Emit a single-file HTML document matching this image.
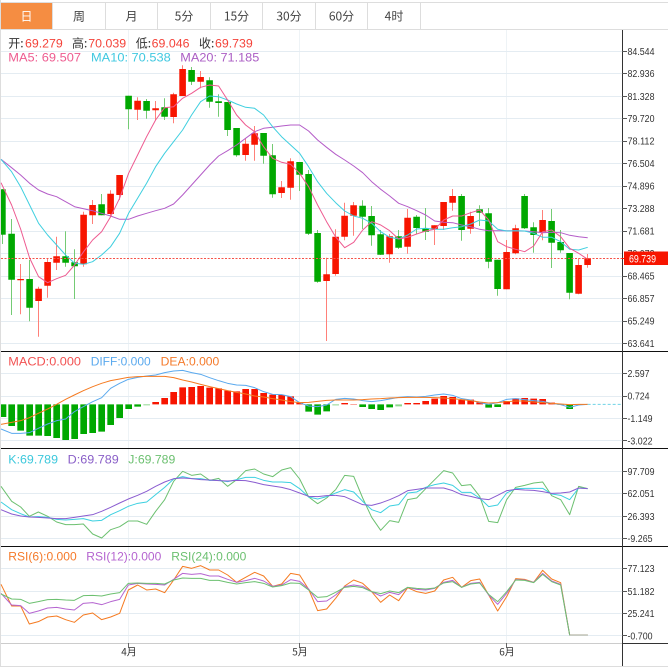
<!DOCTYPE html>
<html>
<head>
<meta charset="utf-8">
<style>
html,body{margin:0;padding:0;background:#fff;}
body{width:668px;height:672px;overflow:hidden;}
svg{display:block;}
text{font-family:"Liberation Sans","Noto Sans CJK SC",sans-serif;}
.cjk{font-family:"Noto Sans CJK SC","Liberation Sans",sans-serif;}
.l{font-size:12px;}
.a{font-size:10px;fill:#333;}
.gm{stroke:#e4ecf2;stroke-width:1;fill:none;}
.ln{fill:none;stroke-width:3;stroke-linejoin:round;}
.ln1{fill:none;stroke-width:1;stroke-linejoin:round;}
</style>
</head>
<body>
<svg width="668" height="672" viewBox="0 0 668 672" xmlns="http://www.w3.org/2000/svg">
<rect width="668" height="672" fill="#fff"/>

<!-- tabs -->
<rect x="1" y="3" width="51" height="26" fill="#f58d42"/>
<path d="M0 2.5H668M0 29.5H668" stroke="#dddddd" fill="none"/>
<path d="M52.5 3V29M105.5 3V29M157.5 3V29M210.5 3V29M262.5 3V29M315.5 3V29M367.5 3V29M420.5 3V29" stroke="#dddddd" fill="none"/>
<g class="cjk" font-size="12" text-anchor="middle" fill="#444">
<text class="cjk" x="26.5" y="20.5" fill="#fff">日</text>
<text class="cjk" x="79" y="20.5">周</text>
<text class="cjk" x="131.5" y="20.5">月</text>
<text class="cjk" x="184" y="20.5">5分</text>
<text class="cjk" x="236.5" y="20.5">15分</text>
<text class="cjk" x="289" y="20.5">30分</text>
<text class="cjk" x="341.5" y="20.5">60分</text>
<text class="cjk" x="394" y="20.5">4时</text>
</g>

<!-- left border -->
<rect x="0" y="0" width="1" height="666" fill="#dddddd"/>

<!-- vertical grid -->
<path d="M128.5 30V643M299.5 30V643M506.5 30V643" stroke="#eef3f6" fill="none"/>

<!-- horizontal grid -->
<path class="gm" d="M1 51.5H622M1 73.5H622M1 96.5H622M1 118.5H622M1 141.5H622M1 163.5H622M1 186.5H622M1 208.5H622M1 231.5H622M1 253.5H622M1 276.5H622M1 298.5H622M1 321.5H622M1 343.5H622"/>
<path class="gm" d="M1 373.5H622M1 396.5H622M1 418.5H622M1 440.5H622"/>
<path class="gm" d="M1 471.5H622M1 493.5H622M1 516.5H622M1 538.5H622"/>
<path class="gm" d="M1 568.5H622M1 591.5H622M1 613.5H622M1 635.5H622"/>

<!-- wicks -->
<path fill="none" stroke="#ff8079" stroke-width="1" d="M20.5 264V314.3M38.5 286.7V336.7M47.5 258.3V297.7M56.5 236.7V270M83.5 211.7V266.7M92.5 200V224M110.5 190.3V217.3M119.5 175V200M137.5 97.3V120M155.5 101V120M173.5 92.7V123.3M182.5 65.3V96M200.5 71V88.3M245.5 138.3V160.7M254.5 126V160.7M281.5 181V198M290.5 158.3V199.7M326.5 257.7V341M335.5 229.3V275.7M344.5 202.7V240.3M353.5 202V235.7M389.5 234V262.7M407.5 209V253.7M434.5 225.3V245M443.5 202V230M452.5 189V210.7M470.5 211.7V233.7M506.5 240V289.3M515.5 224.7V254.3M542.5 210V240.3M578.5 258.3V294.3M587.5 254V267.7"/>
<path fill="none" stroke="#74cb74" stroke-width="1" d="M2.5 189V244M11.5 219V315M29.5 260V321.3M65.5 231.3V266.7M74.5 249.3V299M101.5 194V215.3M128.5 95.7V129.3M146.5 99V118.7M164.5 98.3V120M191.5 67V85M209.5 77.3V107.7M218.5 94.3V116.7M227.5 102V136M236.5 128V156.7M263.5 133V163.7M272.5 144V197.7M299.5 162V191M308.5 170V235M317.5 230V282.7M362.5 200.3V229M371.5 206V245.7M380.5 230V255M398.5 230V249M416.5 215V234M425.5 208V240M461.5 194V240.7M479.5 205.3V226M488.5 208V268.3M497.5 259.7V295.7M524.5 194V229M533.5 222.3V252.7M551.5 209V268M560.5 230V252.7M569.5 253V299.3"/>

<!-- bodies -->
<path fill="none" stroke="#f71500" stroke-width="6.6" d="M20.6 279V280.3M38.6 288.7V301M47.6 262V285.7M56.6 256.3V262.7M83.6 214.7V264.3M92.6 205V215.3M110.6 193.7V214M119.6 175V195M137.6 100.7V109.7M155.6 108.3V110.3M173.6 94.3V117M182.6 69V96M200.6 77V81.7M245.6 143.7V155M254.6 133.3V144.7M281.6 187.3V193M290.6 161.3V187.7M326.6 274.3V281M335.6 236.7V274M344.6 215.7V236.7M353.6 205.3V215.7M389.6 236.3V254.3M407.6 217.7V246.7M434.6 225.3V229M443.6 202V226M452.6 196V202.7M470.6 216V228.7M506.6 252V289.3M515.6 228.3V253.3M542.6 220V232.3M578.6 265V293.7M587.6 258.3V265"/>
<rect x="1" y="189.3" width="4.7" height="45.4" fill="#00a800"/>
<path fill="none" stroke="#00a800" stroke-width="6.6" d="M11.6 233.7V279.7M29.6 279V307.7M65.6 256.3V262.7M74.6 262.3V266.3M101.6 204.3V215.3M128.6 95.7V109.3M146.6 101V110.7M164.6 107.3V116.7M191.6 70V81.7M209.6 80.3V101.7M218.6 101.3V103M227.6 102V130M236.6 128V155.3M263.6 133V155.7M272.6 155.3V194.3M299.6 162V174.7M308.6 174V233.7M317.6 233V281.7M362.6 205.7V216.7M371.6 216V235.3M380.6 234.3V254.7M398.6 236.3V247.7M416.6 216.7V228M425.6 228.3V231.7M461.6 196V230M479.6 209.3V212.7M488.6 213.3V261.7M497.6 259.7V289M524.6 196V228.3M533.6 227.3V235M551.6 221V242.7M560.6 242V250.3M569.6 253V292.7"/>

<!-- MA lines -->
<polyline class="ln1" stroke="#b45cc8" points="1,159.3 11.6,167.7 20.6,175 29.6,183.3 38.6,190 47.6,194 56.6,196.7 65.6,201.7 74.6,206.7 83.6,208.7 92.6,210.7 101.6,213.3 110.6,216 119.6,219.3 128.6,219.3 137.6,216 146.6,213.3 155.6,210.7 164.6,208.3 173.6,204 182.6,195 191.6,185 200.6,175 209.6,165 218.6,156 227.6,150.7 236.6,145 245.6,138.3 254.6,131.7 263.6,128.3 272.6,127.3 281.6,126 290.6,125 299.6,125 308.6,131 317.6,140 326.6,147.3 335.7,154.3 344.7,160 353.7,166 362.7,172.7 371.7,181.7 380.7,189.3 389.7,196 398.7,203.3 407.7,206.7 416.7,210.7 425.7,215 434.7,221 443.7,222.3 452.7,222.7 461.7,225 470.7,226.7 479.7,229.3 488.7,230.7 497.7,230.7 506.7,230.7 515.7,230.7 524.7,231 533.7,231.7 542.7,232.7 551.7,232.3 560.7,232.7 569.7,235.3 578.7,236.7 587.7,237.7"/>
<polyline class="ln1" stroke="#3fcfdf" points="1,159.3 11.6,171.7 20.6,186.7 29.6,205 38.6,223.3 47.6,235 56.6,245 65.6,255 74.6,263.3 83.6,264.3 92.6,261.7 101.6,255 110.6,246.7 119.6,233.3 128.6,213.3 137.6,198.3 146.6,183.3 155.6,166.7 164.6,153.3 173.6,141.7 182.6,130 191.6,115 200.6,101.7 209.6,96 218.6,96.7 227.6,100 236.6,104 245.6,107.3 254.6,108.3 263.6,115 272.6,126.7 281.6,136.7 290.6,145 299.6,153.3 308.6,166.7 317.6,181.7 326.6,193.3 335.7,202.7 344.7,211 353.7,216 362.7,218.3 371.7,223.3 380.7,231.7 389.7,237.3 398.7,239 407.7,235 416.7,229 425.7,228.3 434.7,229.3 443.7,229.3 452.7,227.7 461.7,226.7 470.7,224 479.7,220 488.7,221 497.7,229.3 506.7,231 515.7,230.7 524.7,231 533.7,233.3 542.7,237.3 551.7,237.3 560.7,241.7 569.7,249.3 578.7,250 587.7,247.3"/>
<polyline class="ln1" stroke="#ee5a90" points="1,182.7 11.6,205 20.6,229 29.6,258 38.6,276.7 47.6,282.7 56.6,278.7 65.6,275.3 74.6,265 83.6,251.7 92.6,240 101.6,231.7 110.6,216.7 119.6,198.3 128.6,173.3 137.6,155 146.6,136.7 155.6,120 164.6,107.7 173.6,106.7 182.6,98.3 191.6,93.3 200.6,87.3 209.6,85 218.6,86 227.6,100 236.6,115 245.6,125 254.6,131.7 263.6,146.7 272.6,158.3 281.6,162.3 290.6,164.3 299.6,173.3 308.6,186.7 317.6,205 326.6,221.7 335.7,237 344.7,247.7 353.7,242.3 362.7,230 371.7,221.7 380.7,225 389.7,230.7 398.7,239 407.7,237.3 416.7,234 425.7,231 434.7,229.3 443.7,220 452.7,216 461.7,216 470.7,212.7 479.7,210 488.7,220 497.7,241.7 506.7,246.7 515.7,249.3 524.7,251.7 533.7,246 542.7,231.7 551.7,230 560.7,236.7 569.7,248.3 578.7,253.3 587.7,259.3"/>

<!-- current price line -->
<path d="M1 258.5H622" stroke="#f5534a" stroke-width="1" stroke-dasharray="2 1.5" fill="none"/>

<!-- MACD bars -->
<g transform="translate(0,350) scale(0.33333)">
<rect x="3" y="163" width="16" height="38" fill="#00a800"/>
<path fill="none" stroke="#00a800" stroke-width="20" d="M35 163V228M62 163V242M89 163V257M116 163V257M143 163V258M170 163V264M197 163V270M224 163V267M251 163V252M278 163V249M305 163V245M332 163V225M359 163V204M386 163V177M413 163V170M926 163V185M953 163V194M980 163V184"/>
<path fill="none" stroke="#8fd68f" stroke-width="20" d="M440 163V166"/>
<path fill="none" stroke="#f71500" stroke-width="20" d="M467 163V156M494 163V144M521 163V126M548 163V112M575 163V111M602 163V108M629 163V113M656 163V115M683 163V122M710 163V124M737 163V117M764 163V117M791 163V129M818 163V134M845 163V135M872 163V139M899 163V158"/>
<polyline class="ln" stroke="#5aa9ee" points="3,237 35,250 62,250 88,248 115,235 143,222 170,212 197,207 223,185 250,170 278,155 305,143 332,115 359,100 385,88 413,82 440,78 467,75 494,68 521,63 548,61 575,68 602,73 629,83 656,92 683,100 710,105 737,106 764,113 791,125 818,133 845,134 872,140 899,158 926,168 953,170 980,165 1007,148"/>
<polyline class="ln" stroke="#f57a20" points="3,223 35,217 62,212 88,203 115,190 143,177 170,163 197,148 223,135 250,122 278,110 305,100 332,92 359,87 385,82 413,80 440,79 467,79 494,79 521,83 548,90 575,96 602,103 629,110 656,116 683,122 710,127 737,132 764,138 791,141 818,146 845,150 872,155 899,158 926,157 953,154 980,151 1007,150"/>
</g>
<g transform="translate(334,350) scale(0.33333)">
<path fill="none" stroke="#8fd68f" stroke-width="20" d="M5 163V166M194 163V169"/>
<path fill="none" stroke="#00a800" stroke-width="20" d="M86 163V171M113 163V177M140 163V180M167 163V172M464 163V173M491 163V171M707 163V177"/>
<path fill="none" stroke="#8fd68f" stroke-width="20" d="M680 163V165"/>
<path fill="none" stroke="#f71500" stroke-width="20" d="M32 163V159M59 163V162M221 163V159M248 163V159M275 163V153M302 163V146M329 163V138M356 163V141M383 163V150M410 163V149M437 163V157M518 163V153M545 163V145M572 163V144M599 163V146M626 163V147M653 163V158"/>
<polyline class="ln" stroke="#5aa9ee" points="5,148 32,145 59,147 86,152 113,155 140,152 167,147 194,142 221,140 248,141 275,139 302,135 329,132 356,136 383,146 410,150 437,158 464,163 491,158 518,148 545,146 572,149 599,152 626,154 653,160 680,164 707,172 734,165 761,163"/>
<polyline class="ln" stroke="#f57a20" points="5,150 32,150 59,150 86,149 113,147 140,146 167,144 194,143 221,142 248,142 275,142 302,143 329,144 356,146 383,149 410,152 437,156 464,159 491,158 518,155 545,153 572,153 599,156 626,158 653,160 680,162 707,164 734,163 761,163"/>
<path d="M761 163H860" stroke="#6fd3e6" stroke-width="3" stroke-dasharray="9 6" fill="none"/>
</g>

<!-- KDJ -->
<g transform="translate(0,448) scale(0.33333)">
<polyline class="ln" stroke="#6cc070" points="3,115 35,160 62,177 88,205 115,192 143,205 170,222 197,230 223,230 250,228 278,258 305,270 332,245 359,236 385,219 413,219 440,229 467,190 494,155 521,100 548,70 575,82 602,78 629,97 656,91 683,115 710,95 737,68 764,63 791,78 818,86 845,66 872,59 899,93 926,147 953,167 980,150 1007,125"/>
<polyline class="ln" stroke="#3cd0e0" points="3,162 35,185 62,197 88,207 115,206 143,208 170,214 197,216 223,214 250,212 278,219 305,217 332,200 359,188 385,175 413,166 440,162 467,140 494,118 521,93 548,86 575,92 602,92 629,97 656,97 683,101 710,95 737,88 764,88 791,97 818,102 845,102 872,104 899,122 926,147 953,153 980,146 1007,135"/>
<polyline class="ln" stroke="#8a5cd0" points="3,185 35,198 62,204 88,207 115,208 143,210 170,212 197,212 223,208 250,204 278,200 305,190 332,178 359,165 385,153 413,142 440,130 467,115 494,102 521,92 548,90 575,92 602,95 629,96 656,98 683,99 710,97 737,98 764,103 791,110 818,114 845,118 872,125 899,135 926,145 953,146 980,143 1007,142"/>
</g>
<g transform="translate(334,448) scale(0.33333)">
<polyline class="ln" stroke="#6cc070" points="5,125 32,82 59,85 86,150 113,208 140,247 167,218 194,223 221,155 248,150 275,122 302,95 329,68 356,75 383,113 410,110 437,145 464,220 491,224 518,155 545,118 572,112 599,105 626,102 653,143 680,155 707,200 734,115 761,122"/>
<polyline class="ln" stroke="#3cd0e0" points="5,135 32,125 59,132 86,160 113,185 140,194 167,174 194,170 221,135 248,132 275,118 302,110 329,105 356,112 383,133 410,133 437,150 464,176 491,171 518,135 545,122 572,121 599,121 626,121 653,138 680,142 707,155 734,120 761,122"/>
<polyline class="ln" stroke="#8a5cd0" points="5,142 32,146 59,158 86,170 113,172 140,165 167,155 194,143 221,128 248,124 275,120 302,120 329,120 356,128 383,140 410,145 437,152 464,155 491,142 518,128 545,124 572,126 599,127 626,131 653,136 680,135 707,132 734,120 761,122"/>
</g>

<!-- RSI -->
<g transform="translate(0,545) scale(0.33333)">
<polyline class="ln" stroke="#f57a20" points="3,118 35,183 62,183 88,237 115,230 143,216 170,213 197,224 223,232 250,210 278,204 305,224 332,216 359,205 385,135 413,120 440,135 467,132 494,143 521,105 548,64 575,70 602,62 629,75 656,75 683,90 710,112 737,97 764,82 791,93 818,124 845,117 872,85 899,90 926,133 953,197 980,192 1007,160"/>
<polyline class="ln" stroke="#b565d0" points="3,145 35,180 62,182 88,205 115,198 143,189 170,187 197,192 223,195 250,175 278,173 305,179 332,170 359,163 385,120 413,115 440,117 467,118 494,120 521,103 548,85 575,88 602,86 629,93 656,93 683,103 710,112 737,107 764,100 791,108 818,124 845,120 872,104 899,109 926,132 953,170 980,168 1007,150"/>
<polyline class="ln" stroke="#6cc070" points="3,147 35,162 62,163 88,175 115,170 143,164 170,163 197,165 223,166 250,152 278,151 305,153 332,147 359,143 385,115 413,114 440,115 467,115 494,117 521,105 548,99 575,100 602,100 629,106 656,106 683,112 710,117 737,113 764,110 791,115 818,126 845,122 872,114 899,115 926,135 953,157 980,155 1007,142"/>
</g>
<g transform="translate(334,545) scale(0.33333)">
<polyline class="ln" stroke="#f57a20" points="5,160 32,123 59,105 86,115 113,140 140,172 167,150 194,167 221,128 248,140 275,145 302,138 329,105 356,97 383,127 410,107 437,102 464,150 491,198 518,155 545,101 572,103 599,112 626,76 653,102 680,113 707,270 761,270"/>
<polyline class="ln" stroke="#b565d0" points="5,150 32,125 59,120 86,124 113,140 140,153 167,142 194,149 221,127 248,133 275,135 302,130 329,112 356,106 383,127 410,115 437,112 464,150 491,178 518,145 545,104 572,105 599,112 626,85 653,108 680,118 707,270 761,270"/>
<polyline class="ln" stroke="#6cc070" points="5,142 32,127 59,124 86,128 113,140 140,146 167,138 194,143 221,127 248,130 275,132 302,129 329,114 356,110 383,127 410,117 437,114 464,148 491,170 518,140 545,105 572,106 599,113 626,88 653,110 680,120 707,270 761,270"/>
<path d="M707 270H761" stroke="#b8b8a8" stroke-width="4" fill="none"/>
</g>

<!-- dividers and axis -->
<path d="M1 351.5H668M1 448.5H668M1 546.5H668" stroke="#111" stroke-width="1" fill="none"/>
<path d="M1 643.5H622" stroke="#cccccc" stroke-width="1" fill="none"/>
<path d="M622 643.5H668" stroke="#333" stroke-width="1" fill="none"/>
<path d="M622.5 30V666" stroke="#333" stroke-width="1" fill="none"/>
<path d="M0 666.5H668" stroke="#dddddd" stroke-width="1" fill="none"/>

<!-- ticks -->
<path d="M622 51.5H627M622 73.5H627M622 96.5H627M622 118.5H627M622 141.5H627M622 163.5H627M622 186.5H627M622 208.5H627M622 231.5H627M622 276.5H627M622 298.5H627M622 321.5H627M622 343.5H627M622 373.5H627M622 396.5H627M622 418.5H627M622 440.5H627M622 471.5H627M622 493.5H627M622 516.5H627M622 538.5H627M622 568.5H627M622 591.5H627M622 613.5H627M622 635.5H627" stroke="#555" stroke-width="1" fill="none"/>
<path d="M128.5 643V648M299.5 643V648M506.5 643V648" stroke="#666" fill="none"/>

<!-- axis labels -->
<text class="a" x="627.5" y="54.8" textLength="27" lengthAdjust="spacingAndGlyphs">84.544</text>
<text class="a" x="627.5" y="77" textLength="27" lengthAdjust="spacingAndGlyphs">82.936</text>
<text class="a" x="627.5" y="99.8" textLength="27" lengthAdjust="spacingAndGlyphs">81.328</text>
<text class="a" x="627.5" y="122" textLength="27" lengthAdjust="spacingAndGlyphs">79.720</text>
<text class="a" x="627.5" y="144.5" textLength="27" lengthAdjust="spacingAndGlyphs">78.112</text>
<text class="a" x="627.5" y="167" textLength="27" lengthAdjust="spacingAndGlyphs">76.504</text>
<text class="a" x="627.5" y="189.5" textLength="27" lengthAdjust="spacingAndGlyphs">74.896</text>
<text class="a" x="627.5" y="212" textLength="27" lengthAdjust="spacingAndGlyphs">73.288</text>
<text class="a" x="627.5" y="234.5" textLength="27" lengthAdjust="spacingAndGlyphs">71.681</text>
<text class="a" x="627.5" y="257" textLength="27" lengthAdjust="spacingAndGlyphs">70.073</text>
<rect x="624" y="251.5" width="44" height="13.5" fill="#f71500"/>
<path d="M622 258.5H624" stroke="#f71500" fill="none"/>
<text x="629" y="262.3" font-size="11" fill="#fff" textLength="27" lengthAdjust="spacingAndGlyphs">69.739</text>
<text class="a" x="627.5" y="279.5" textLength="27" lengthAdjust="spacingAndGlyphs">68.465</text>
<text class="a" x="627.5" y="302" textLength="27" lengthAdjust="spacingAndGlyphs">66.857</text>
<text class="a" x="627.5" y="324.5" textLength="27" lengthAdjust="spacingAndGlyphs">65.249</text>
<text class="a" x="627.5" y="347" textLength="27" lengthAdjust="spacingAndGlyphs">63.641</text>

<text class="a" x="627.5" y="377" textLength="22" lengthAdjust="spacingAndGlyphs">2.597</text>
<text class="a" x="627.5" y="399.5" textLength="22" lengthAdjust="spacingAndGlyphs">0.724</text>
<text class="a" x="627.5" y="422" textLength="25" lengthAdjust="spacingAndGlyphs">-1.149</text>
<text class="a" x="627.5" y="444.3" textLength="25" lengthAdjust="spacingAndGlyphs">-3.022</text>

<text class="a" x="627.5" y="474.8" textLength="27" lengthAdjust="spacingAndGlyphs">97.709</text>
<text class="a" x="627.5" y="497" textLength="27" lengthAdjust="spacingAndGlyphs">62.051</text>
<text class="a" x="627.5" y="519.8" textLength="27" lengthAdjust="spacingAndGlyphs">26.393</text>
<text class="a" x="627.5" y="542" textLength="25" lengthAdjust="spacingAndGlyphs">-9.265</text>

<text class="a" x="627.5" y="572" textLength="27" lengthAdjust="spacingAndGlyphs">77.123</text>
<text class="a" x="627.5" y="595" textLength="27" lengthAdjust="spacingAndGlyphs">51.182</text>
<text class="a" x="627.5" y="617" textLength="27" lengthAdjust="spacingAndGlyphs">25.241</text>
<text class="a" x="627.5" y="639.5" textLength="25" lengthAdjust="spacingAndGlyphs">-0.700</text>

<text class="cjk" x="129" y="655.5" font-size="10" fill="#333" text-anchor="middle">4月</text>
<text class="cjk" x="300" y="655.5" font-size="10" fill="#333" text-anchor="middle">5月</text>
<text class="cjk" x="507" y="655.5" font-size="10" fill="#333" text-anchor="middle">6月</text>

<!-- legends -->
<text class="l cjk" x="8.3" y="47.5" fill="#333">开:</text>
<text class="l" x="25" y="47.5" fill="#f4433a" textLength="37.8" lengthAdjust="spacingAndGlyphs">69.279</text>
<text class="l cjk" x="72" y="47.5" fill="#333">高:</text>
<text class="l" x="88.3" y="47.5" fill="#f4433a" textLength="37.8" lengthAdjust="spacingAndGlyphs">70.039</text>
<text class="l cjk" x="135.7" y="47.5" fill="#333">低:</text>
<text class="l" x="151.7" y="47.5" fill="#f4433a" textLength="37.8" lengthAdjust="spacingAndGlyphs">69.046</text>
<text class="l cjk" x="199" y="47.5" fill="#333">收:</text>
<text class="l" x="215" y="47.5" fill="#f4433a" textLength="37.8" lengthAdjust="spacingAndGlyphs">69.739</text>

<text class="l" x="8.3" y="61.5" fill="#ee5c90" textLength="72.7" lengthAdjust="spacingAndGlyphs">MA5: 69.507</text>
<text class="l" x="91" y="61.5" fill="#3fc8e0" textLength="79.7" lengthAdjust="spacingAndGlyphs">MA10: 70.538</text>
<text class="l" x="180.3" y="61.5" fill="#ab5ec4" textLength="79" lengthAdjust="spacingAndGlyphs">MA20: 71.185</text>

<text class="l" x="8.3" y="365.5" fill="#f25252" textLength="72.7" lengthAdjust="spacingAndGlyphs">MACD:0.000</text>
<text class="l" x="90.7" y="365.5" fill="#5aa9ee" textLength="60" lengthAdjust="spacingAndGlyphs">DIFF:0.000</text>
<text class="l" x="160.7" y="365.5" fill="#f57a2a" textLength="58.6" lengthAdjust="spacingAndGlyphs">DEA:0.000</text>

<text class="l" x="8.3" y="463.5" fill="#3cc8dc" textLength="49.7" lengthAdjust="spacingAndGlyphs">K:69.789</text>
<text class="l" x="67.7" y="463.5" fill="#8a5fc8" textLength="51" lengthAdjust="spacingAndGlyphs">D:69.789</text>
<text class="l" x="128.3" y="463.5" fill="#6cc070" textLength="47" lengthAdjust="spacingAndGlyphs">J:69.789</text>

<text class="l" x="8.3" y="560.5" fill="#f57a2a" textLength="68.4" lengthAdjust="spacingAndGlyphs">RSI(6):0.000</text>
<text class="l" x="86.3" y="560.5" fill="#b565d0" textLength="75" lengthAdjust="spacingAndGlyphs">RSI(12):0.000</text>
<text class="l" x="171.3" y="560.5" fill="#6cc070" textLength="75" lengthAdjust="spacingAndGlyphs">RSI(24):0.000</text>
</svg>
</body>
</html>
